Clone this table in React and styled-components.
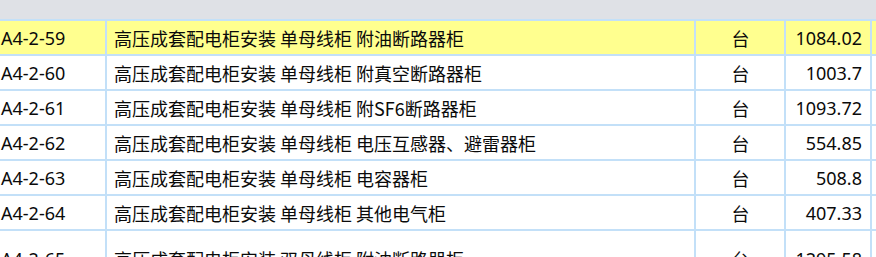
import React from "react";
import styled, { createGlobalStyle } from "styled-components";

const Global = createGlobalStyle`
  html, body { margin: 0; padding: 0; background: #fff; }
  body {
    font-family: "Noto Sans", "Noto Sans CJK SC", sans-serif;
    font-size: 18px;
    color: #0a0a0a;
    overflow: hidden;
  }
`;

const rows = [
  { code: "A4-2-59", name: "高压成套配电柜安装 单母线柜 附油断路器柜", unit: "台", price: "1084.02", active: true },
  { code: "A4-2-60", name: "高压成套配电柜安装 单母线柜 附真空断路器柜", unit: "台", price: "1003.7" },
  { code: "A4-2-61", name: "高压成套配电柜安装 单母线柜 附SF6断路器柜", unit: "台", price: "1093.72" },
  { code: "A4-2-62", name: "高压成套配电柜安装 单母线柜 电压互感器、避雷器柜", unit: "台", price: "554.85" },
  { code: "A4-2-63", name: "高压成套配电柜安装 单母线柜 电容器柜", unit: "台", price: "508.8" },
  { code: "A4-2-64", name: "高压成套配电柜安装 单母线柜 其他电气柜", unit: "台", price: "407.33" },
  { code: "A4-2-65", name: "高压成套配电柜安装 双母线柜 附油断路器柜", unit: "台", price: "1295.58", tall: true },
];

const Page = styled.div`
  width: 876px;
  height: 257px;
  overflow: hidden;
`;

const Header = styled.div`
  height: 19px;
  background: #dfe1e6;
  border-bottom: 2px solid #c3e0f8;
`;

const Row = styled.div`
  display: grid;
  grid-template-columns: 107px 589px 90px 86px 4px;
  height: ${(p) => (p.$tall ? "56px" : "33px")};
  border-bottom: 2px solid #c3e0f8;
  background: ${(p) => (p.$active ? "#ffff8f" : "#fff")};
`;

const Cell = styled.div`
  display: flex;
  align-items: center;
  white-space: nowrap;
  overflow: hidden;
  border-right: 2px solid #c3e0f8;
  padding: ${(p) => p.$pad || "0 0 0 1px"};
  justify-content: ${(p) => p.$align || "flex-start"};
  font-family: ${(p) =>
    p.$cjk ? '"Noto Sans CJK SC", "Noto Sans", sans-serif' : '"Noto Sans", "Noto Sans CJK SC", sans-serif'};
`;

const Tail = styled.div``;

export default function App() {
  return (
    <Page>
      <Global />
      <Header />
      {rows.map((r) => (
        <Row key={r.code} $active={r.active} $tall={r.tall}>
          <Cell>{r.code}</Cell>
          <Cell $cjk $pad="0 0 0 7px">{r.name}</Cell>
          <Cell $cjk $align="center">{r.unit}</Cell>
          <Cell $align="flex-end" $pad="0 8px 0 0">{r.price}</Cell>
          <Tail />
        </Row>
      ))}
    </Page>
  );
}
